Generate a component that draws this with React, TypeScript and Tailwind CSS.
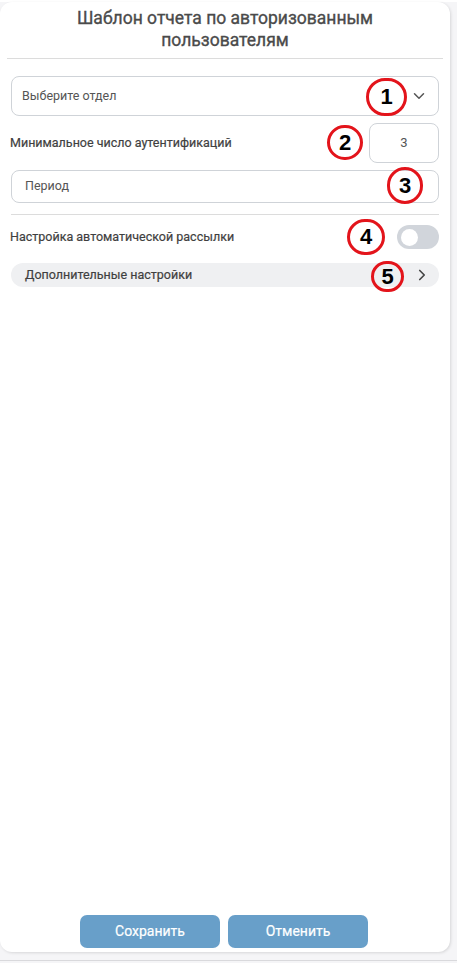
import { ChevronDown, ChevronRight } from 'lucide-react'

const marks = [
  { n: '1', cls: 'left-[366px] top-[76px] w-[41px] h-[38px]' },
  { n: '2', cls: 'left-[327px] top-[123px] w-[36px] h-[35px]' },
  { n: '3', cls: 'left-[387px] top-[165px] w-[36px] h-[37px]' },
  { n: '4', cls: 'left-[347px] top-[217px] w-[38px] h-[36px]' },
  { n: '5', cls: 'left-[371px] top-[259px] w-[33px] h-[31px]' },
]

export default function App() {
  return (
    <div className="h-[963px] bg-[#f5f5f7] font-['Roboto',sans-serif] relative">
      <div className="h-[959px] border-b border-[#d9d9dc]">
        <div className="relative mt-[2px] w-[450px] h-[950px] rounded-[12px] bg-white shadow-[1px_1px_3px_rgba(0,0,0,0.12)] flex flex-col">
          <div className="px-8 pt-[5px] pb-[7px] mx-[7px] border-b border-[#dcdcdc] text-center text-[17.5px] leading-[22px] text-[#4a4a4a] [-webkit-text-stroke:0.35px_#4a4a4a]">
            Шаблон отчета по авторизованным пользователям
          </div>

          <div className="px-[11px] pt-[17px] flex flex-col">
            <div className="h-[40px] rounded-[8px] border border-[#cfd3d8] flex items-center justify-between pl-[10px] pr-[10px] text-[12.5px] text-[#555]">
              <span>Выберите отдел</span>
              <ChevronDown className="w-[18px] h-[18px] text-[#555]" strokeWidth={2} />
            </div>

            <div className="mt-[7px] flex items-center justify-between">
              <span className="-ml-[1px] text-[12.5px] text-[#3f3f3f] [-webkit-text-stroke:0.2px_#3f3f3f]">Минимальное число аутентификаций</span>
              <div className="w-[70px] h-[40px] rounded-[8px] border border-[#cfd3d8] flex items-center justify-center text-[13px] text-[#555]">3</div>
            </div>

            <div className="mt-[7px] h-[33px] rounded-[8px] border border-[#cfd3d8] flex items-center pl-[13px] text-[12.5px] text-[#555]">
              Период
            </div>

            <div className="mt-[11px] border-t border-[#dcdcdc]" />

            <div className="mt-[10px] flex items-center justify-between">
              <span className="-ml-[1px] text-[12.5px] text-[#3f3f3f] [-webkit-text-stroke:0.2px_#3f3f3f]">Настройка автоматической рассылки</span>
              <div className="w-[42px] h-[24px] rounded-full bg-[#d1d5db] flex items-center px-[4px]">
                <div className="w-[17px] h-[17px] rounded-full bg-white" />
              </div>
            </div>

            <div className="mt-[14px] h-[24px] rounded-full bg-[#eff0f2] flex items-center justify-between pl-[14px] pr-[8px] text-[12.5px] text-[#3f3f3f] [-webkit-text-stroke:0.2px_#3f3f3f]">
              <span>Дополнительные настройки</span>
              <ChevronRight className="w-[18px] h-[18px] text-[#444]" strokeWidth={2.2} />
            </div>
          </div>

          <div className="mt-auto mb-[4px] flex justify-center gap-[8px] pr-[2px]">
            <button className="w-[140px] h-[33px] rounded-[7px] bg-[#689fc9] text-white text-[14px] [-webkit-text-stroke:0.2px_#fff]">Сохранить</button>
            <button className="w-[140px] h-[33px] rounded-[7px] bg-[#689fc9] text-white text-[14px] [-webkit-text-stroke:0.2px_#fff]">Отменить</button>
          </div>

          {marks.map(m => (
            <div key={m.n} className={`absolute ${m.cls} rounded-full border-[3px] border-[#e3141b] flex items-center justify-center text-[22px] font-bold text-black font-['Liberation_Sans',sans-serif] leading-none`}>
              {m.n}
            </div>
          ))}
        </div>
      </div>
    </div>
  )
}
